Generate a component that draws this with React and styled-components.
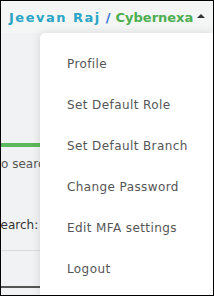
import React from 'react'
import styled, { createGlobalStyle } from 'styled-components'

const Global = createGlobalStyle`
  html, body { margin: 0; padding: 0; background: #fff; }
  body { font-family: "DejaVu Sans", "Open Sans", sans-serif; }
`

const Frame = styled.div`
  position: relative;
  width: 214px;
  height: 296px;
  box-sizing: border-box;
  border: 1px solid #000;
  overflow: hidden;
  background: #f1f2f4;
`

const Header = styled.div`
  height: 32px;
  display: flex;
  align-items: center;
  padding-left: 8px;
  background: #f4f6f5;
  font-size: 13px;
  font-weight: bold;
  white-space: nowrap;
`

const Name = styled.span`
  color: ${p => p.color};
  letter-spacing: ${p => p.spacing}px;
`

const Slash = styled.span`
  color: #2f6fe0;
  margin: 0 5px 0 5px;
`

const Caret = styled.span`
  width: 0;
  height: 0;
  margin-left: 4px;
  margin-bottom: 2px;
  border-left: 4px solid transparent;
  border-right: 4px solid transparent;
  border-bottom: 4px solid #333;
`

const Page = styled.div`
  display: flex;
  flex-direction: column;
  height: 262px;
  margin-left: -40px;
  width: 200px;
`

const GreenBar = styled.div`
  margin-top: 110px;
  height: 4px;
  background: #5cb85c;
`

const Hint = styled.div`
  margin-top: 10px;
  margin-left: 4px;
  font-size: 12px;
  color: #555;
  white-space: nowrap;
`

const Label = styled.div`
  margin-top: 47px;
  margin-left: 32px;
  font-size: 12px;
  font-weight: 500;
  color: #333;
  white-space: nowrap;
`

const Divider = styled.div`
  margin-top: ${p => p.gap}px;
  height: ${p => p.size}px;
  background: ${p => p.color};
`

const Menu = styled.ul`
  position: absolute;
  top: 32px;
  left: 39px;
  right: 0;
  bottom: 0;
  margin: 0;
  padding: 10px 0 0;
  list-style: none;
  background: #fff;
  border-top-left-radius: 5px;
  box-shadow: 0 0 10px rgba(0, 0, 0, 0.12);
`

const Item = styled.li`
  height: 41px;
  display: flex;
  align-items: center;
  padding-left: 27px;
  font-size: 12px;
  letter-spacing: 0.4px;
  color: #555;
  white-space: nowrap;
`

const items = [
  'Profile',
  'Set Default Role',
  'Set Default Branch',
  'Change Password',
  'Edit MFA settings',
  'Logout',
]

export default function App() {
  return (
    <Frame>
      <Global />
      <Header>
        <Name color="#2aa5c6" spacing={1.5}>Jeevan Raj</Name>
        <Slash>/</Slash>
        <Name color="#4cae50" spacing={0}>Cybernexa</Name>
        <Caret />
      </Header>
      <Page>
        <GreenBar />
        <Hint>Type to search</Hint>
        <Label>Search:</Label>
        <Divider gap={18} size={1} color="#dcdcdc" />
        <Divider gap={35} size={2} color="#555" />
      </Page>
      <Menu>
        {items.map(i => <Item key={i}>{i}</Item>)}
      </Menu>
    </Frame>
  )
}
